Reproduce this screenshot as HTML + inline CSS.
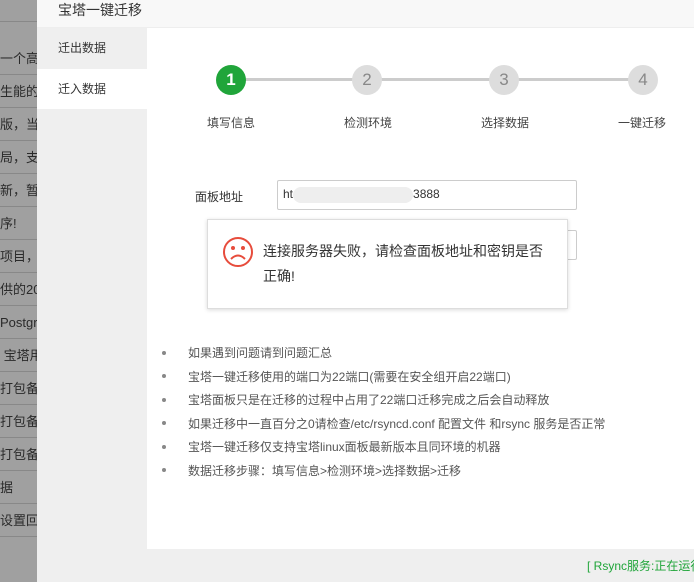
<!DOCTYPE html>
<html><head><meta charset="utf-8"><style>
*{margin:0;padding:0;box-sizing:border-box}
body{width:694px;height:582px;overflow:hidden;position:relative;background:#fff;font-family:"Liberation Sans","Noto Sans CJK SC",sans-serif;font-size:12px;color:#555}
.strip{position:absolute;left:0;top:0;width:37px;height:582px;background:#a0a0a0;overflow:hidden}
.strip div{height:33px;border-bottom:1px solid #888;line-height:33px;color:#2a2a2a;white-space:nowrap;font-size:13px}
.dlg{position:absolute;left:37px;top:0;width:657px;height:582px;background:#efefef}
.hd{height:28px;background:#f8f8f8;line-height:20px;padding-left:21px;font-size:14px;color:#333;border-bottom:1px solid #eee}
.side div{height:40px;line-height:40px;padding-left:21px;font-size:12px;color:#333}
.main{position:absolute;left:110px;top:28px;width:547px;height:521px;background:#fff}
.line{position:absolute;top:50px;left:84px;width:412px;height:3px;background:#ccc}
.c{position:absolute;top:37px;width:30px;height:30px;border-radius:50%;background:#ddd;color:#888;font-size:17px;text-align:center;line-height:30px}
.lb{position:absolute;top:86px;font-size:12px;color:#444;width:80px;text-align:center}
.lab{position:absolute;left:48px;top:160px;color:#333}
.inp{position:absolute;left:130px;width:300px;height:30px;border:1px solid #ccc;border-radius:2px}
.pop{position:absolute;left:170px;top:219px;width:361px;height:90px;background:#fff;border:1px solid #ddd;box-shadow:0 1px 4px rgba(0,0,0,.15)}
ul{position:absolute;left:15px;top:314px;list-style:none}
li{height:23.5px;line-height:23.5px;color:#555;font-size:12px}
li:before{content:"";display:inline-block;width:4px;height:4px;border-radius:50%;background:#888;margin:0 22px 2px 0;vertical-align:middle}
</style></head><body>
<div class="strip">
<div style="height:22px"></div>
<div style="height:20px;border:none"></div>
<div>一个高性</div><div>生能的ke</div><div>版，当前</div><div>局，支持</div><div>新，暂时</div><div>序!</div><div>项目，当</div><div>供的20</div><div>Postgre</div><div>&nbsp;宝塔用</div><div>打包备份</div><div>打包备份</div><div>打包备份</div><div>据</div><div>设置回调</div>
</div>
<div class="dlg">
<div class="hd">宝塔一键迁移</div>
<div class="side"><div style="height:41px;line-height:41px">迁出数据</div><div style="background:#fff">迁入数据</div></div>
<div class="main">
<div class="line"></div>
<div class="c" style="left:69px;background:#20a53a;color:#fff;font-weight:bold">1</div>
<div class="c" style="left:205px">2</div>
<div class="c" style="left:342px">3</div>
<div class="c" style="left:481px">4</div>
<div class="lb" style="left:44px">填写信息</div>
<div class="lb" style="left:181px">检测环境</div>
<div class="lb" style="left:318px">选择数据</div>
<div class="lb" style="left:455px">一键迁移</div>
<div class="lab">面板地址</div>
<div class="inp" style="top:152px;padding:6px 5px;color:#333">ht<span style="display:inline-block;width:120px;height:16px;background:#eee;border-radius:8px;vertical-align:middle"></span>3888</div>
<div class="inp" style="top:202px"></div>
<div style="position:absolute;left:130px;top:274px;width:56px;height:10px;border-top:2px solid #20a53a"></div>
<ul>
<li>如果遇到问题请到问题汇总</li>
<li>宝塔一键迁移使用的端口为22端口(需要在安全组开启22端口)</li>
<li>宝塔面板只是在迁移的过程中占用了22端口迁移完成之后会自动释放</li>
<li>如果迁移中一直百分之0请检查/etc/rsyncd.conf 配置文件 和rsync 服务是否正常</li>
<li>宝塔一键迁移仅支持宝塔linux面板最新版本且同环境的机器</li>
<li>数据迁移步骤：填写信息&gt;检测环境&gt;选择数据&gt;迁移</li>
</ul>
</div>
<div style="position:absolute;left:550px;top:557px;color:#20a53a;white-space:nowrap">[ Rsync服务:正在运行</div>
</div>
<div class="pop" style="left:207px">
<svg style="position:absolute;left:14px;top:16px" width="32" height="32" viewBox="0 0 32 32"><circle cx="16" cy="16" r="14" fill="none" stroke="#e74c3c" stroke-width="2"/><circle cx="11" cy="12" r="2" fill="#e74c3c"/><circle cx="21" cy="12" r="2" fill="#e74c3c"/><path d="M9 23 Q16 16 23 23" fill="none" stroke="#e74c3c" stroke-width="2"/></svg>
<div style="position:absolute;left:55px;top:19px;width:290px;font-size:14px;line-height:25px;color:#333">连接服务器失败，请检查面板地址和密钥是否正确!</div>
</div>
</body></html>
